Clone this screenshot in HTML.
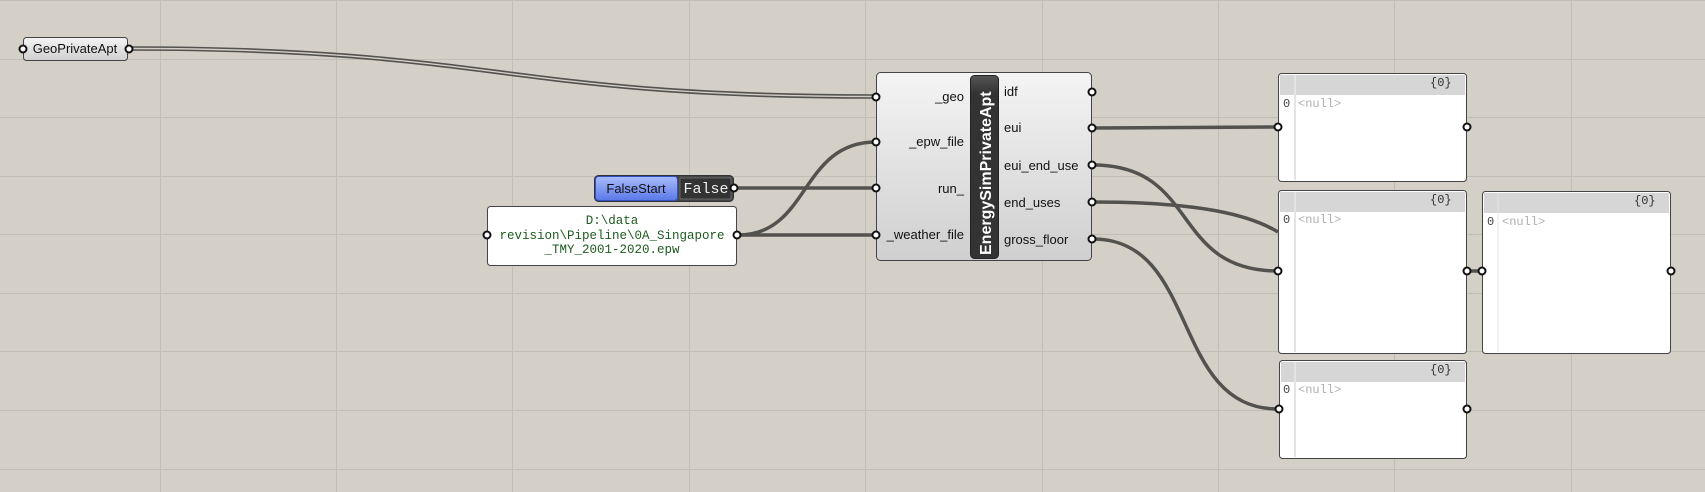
<!DOCTYPE html>
<html><head><style>
body{margin:0;width:1705px;height:492px;overflow:hidden;background:#d4d0c8;}
svg{display:block}
</style></head><body>
<svg width="1705" height="492" xmlns="http://www.w3.org/2000/svg" font-family="Liberation Sans, sans-serif">
<defs>
<linearGradient id="comp" x1="0" y1="0" x2="0" y2="1"><stop offset="0" stop-color="#f4f4f4"/><stop offset="1" stop-color="#cfcfcf"/></linearGradient>
<linearGradient id="blue" x1="0" y1="0" x2="0" y2="1"><stop offset="0" stop-color="#a9bcfb"/><stop offset="1" stop-color="#5a78e8"/></linearGradient>
<linearGradient id="strip" x1="0" y1="0" x2="0" y2="1"><stop offset="0" stop-color="#555"/><stop offset="0.1" stop-color="#333"/><stop offset="1" stop-color="#333"/></linearGradient>
</defs>
<g stroke="#c2beb6" stroke-width="1">
<path d="M160.5 0V492M336.5 0V492M512.5 0V492M689.5 0V492M865.5 0V492M1042.5 0V492M1218.5 0V492M1394.5 0V492M1571.5 0V492"/>
<path d="M0 0.5H1705M0 59.5H1705M0 117.5H1705M0 176.5H1705M0 234.5H1705M0 293.5H1705M0 351.5H1705M0 410.5H1705M0 469.5H1705"/>
</g>
<g fill="none" stroke="#54524e" stroke-width="3.5">
<path d="M130 47 C500 47,500 95,876 95" stroke-width="1.6"/>
<path d="M130 50 C500 50,500 98,876 98" stroke-width="1.6"/>
<path d="M736 188 H876"/>
<path d="M738 235 H876"/>
<path d="M738 235 C810 235,800 142,876 142"/>
<path d="M1093 128 C1180 128,1190 127,1278 127"/>
<path d="M1093 165 C1200 165,1170 271,1278 271"/>
<path d="M1093 202 C1200 202,1250 215,1278 232"/>
<path d="M1093 239 C1200 239,1170 409,1278 409"/>
<path d="M1469 271 H1482"/>
</g>
<rect x="23.5" y="37.5" width="104" height="23" rx="3" fill="url(#comp)" stroke="#444"/>
<text x="75" y="53" font-size="13" text-anchor="middle" fill="#111">GeoPrivateApt</text>
<rect x="594.5" y="175.5" width="139" height="26" rx="4" fill="#444" stroke="#333"/>
<rect x="595.5" y="176.5" width="82" height="24" rx="3" fill="url(#blue)" stroke="#3350c0"/>
<text x="636" y="193" font-size="13" text-anchor="middle" fill="#111">FalseStart</text>
<rect x="680" y="178" width="51" height="21" fill="#333" stroke="#888" stroke-width="0.6"/>
<text x="706" y="193" font-size="15" text-anchor="middle" fill="#eee" font-family="Liberation Mono, monospace">False</text>
<rect x="487.5" y="206.5" width="249" height="59" rx="3" fill="#fff" stroke="#444"/>
<g font-family="Liberation Mono, monospace" font-size="12.5" fill="#1d5a1d" text-anchor="middle">
<text x="612" y="224">D:\data</text>
<text x="612" y="239">revision\Pipeline\0A_Singapore</text>
<text x="612" y="253">_TMY_2001-2020.epw</text>
</g>
<rect x="876.5" y="72.5" width="215" height="188" rx="4" fill="url(#comp)" stroke="#444"/>
<rect x="970.5" y="75.5" width="28" height="183" rx="4" fill="url(#strip)" stroke="#222"/>
<text transform="translate(991 255) rotate(-90)" font-size="16" font-weight="bold" fill="#fff">EnergySimPrivateApt</text>
<g font-size="13" fill="#111" text-anchor="end">
<text x="964" y="101">_geo</text><text x="964" y="146">_epw_file</text><text x="964" y="193">run_</text><text x="964" y="239">_weather_file</text>
</g>
<g font-size="13" fill="#111">
<text x="1004" y="96">idf</text><text x="1004" y="132">eui</text><text x="1004" y="170">eui_end_use</text><text x="1004" y="207">end_uses</text><text x="1004" y="244">gross_floor</text>
</g>
<g font-family="Liberation Mono, monospace" font-size="12">
<rect x="1278.5" y="73.5" width="188" height="108" rx="3" fill="#fff" stroke="#444"/>
<rect x="1280" y="75" width="185" height="20" fill="#d6d6d6"/><line x1="1295" y1="75" x2="1295" y2="180" stroke="#e4e4e4" stroke-width="2"/>
<text x="1430" y="86" fill="#333">{0}</text><text x="1283" y="107" fill="#444">0</text><text x="1298" y="107" fill="#b0b0b0">&lt;null&gt;</text>

<rect x="1278.5" y="190.5" width="188" height="163" rx="3" fill="#fff" stroke="#444"/>
<rect x="1280" y="192" width="185" height="20" fill="#d6d6d6"/><line x1="1295" y1="192" x2="1295" y2="352" stroke="#e4e4e4" stroke-width="2"/>
<text x="1430" y="203" fill="#333">{0}</text><text x="1283" y="223" fill="#444">0</text><text x="1298" y="223" fill="#b0b0b0">&lt;null&gt;</text>

<rect x="1482.5" y="191.5" width="188" height="162" rx="3" fill="#fff" stroke="#444"/>
<rect x="1484" y="193" width="185" height="20" fill="#d6d6d6"/><line x1="1498" y1="193" x2="1498" y2="352" stroke="#e4e4e4" stroke-width="1"/>
<text x="1634" y="204" fill="#333">{0}</text><text x="1487" y="225" fill="#444">0</text><text x="1502" y="225" fill="#b0b0b0">&lt;null&gt;</text>

<rect x="1279.5" y="360.5" width="187" height="98" rx="3" fill="#fff" stroke="#444"/>
<rect x="1281" y="362" width="184" height="20" fill="#d6d6d6"/><line x1="1295" y1="362" x2="1295" y2="457" stroke="#e4e4e4" stroke-width="2"/>
<text x="1430" y="373" fill="#333">{0}</text><text x="1283" y="393" fill="#444">0</text><text x="1298" y="393" fill="#b0b0b0">&lt;null&gt;</text>
</g>
<g fill="#fff" stroke="#111" stroke-width="2">
<circle cx="23" cy="49" r="3.5"/><circle cx="129" cy="49" r="3.5"/>
<circle cx="734" cy="188" r="3.5"/>
<circle cx="487" cy="235" r="3.5"/><circle cx="737" cy="235" r="3.5"/>
<circle cx="876" cy="97" r="3.5"/><circle cx="876" cy="142" r="3.5"/><circle cx="876" cy="188" r="3.5"/><circle cx="876" cy="235" r="3.5"/>
<circle cx="1092" cy="92" r="3.5"/><circle cx="1092" cy="128" r="3.5"/><circle cx="1092" cy="165" r="3.5"/><circle cx="1092" cy="202" r="3.5"/><circle cx="1092" cy="239" r="3.5"/>
<circle cx="1278" cy="127" r="3.5"/><circle cx="1467" cy="127" r="3.5"/>
<circle cx="1278" cy="271" r="3.5"/><circle cx="1467" cy="271" r="3.5"/>
<circle cx="1482" cy="271" r="3.5"/><circle cx="1671" cy="271" r="3.5"/>
<circle cx="1279" cy="409" r="3.5"/><circle cx="1467" cy="409" r="3.5"/>
</g>
</svg>
</body></html>
